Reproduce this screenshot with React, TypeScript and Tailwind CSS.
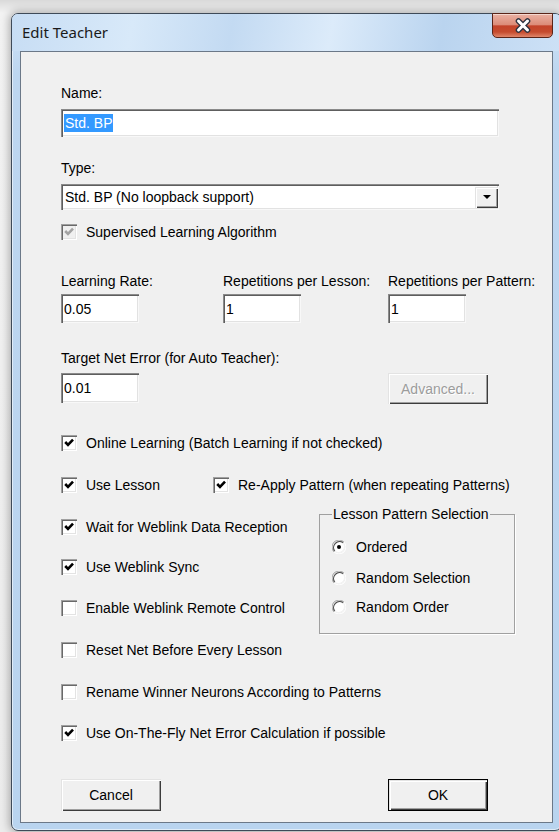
import React from "react";

// classic 3D edges drawn with inset shadows
const sunken =
  "shadow-[inset_1px_1px_0_#8a8a8a,inset_2px_2px_0_#5e5e5e,inset_-1px_-1px_0_#f8f8f8,inset_-2px_-2px_0_#e2e2e2]";
const raised =
  "shadow-[inset_1px_1px_0_#e3e3e3,inset_2px_2px_0_#ffffff,inset_-1px_-1px_0_#3c3c3c,inset_-2px_-2px_0_#a0a0a0]";

interface CheckProps {
	checked?: boolean;
	disabled?: boolean;
	label: string;
	className?: string;
}

const CheckBox: React.FC<CheckProps> = ({ checked, disabled, label, className = "" }): JSX.Element => {
	return (
		<div className={`flex h-4 items-center gap-[9px] ${className}`}>
			<span
				className={`flex h-4 w-4 shrink-0 items-center justify-center ${
					disabled ? "bg-[#f0f0f0]" : "bg-white"
				} shadow-[inset_1px_1px_0_#a0a0a0,inset_2px_2px_0_#696969,inset_-1px_-1px_0_#ffffff,inset_-2px_-2px_0_#e3e3e3]`}
			>
				{checked && (
					<svg viewBox="0 0 16 16" className="h-4 w-4">
						<path
							d="M4.2 7 L7 9.9 L12 4.6"
							fill="none"
							stroke={disabled ? "#a3a3a3" : "#000"}
							strokeWidth={2.6}
						/>
					</svg>
				)}
			</span>
			<span className="whitespace-nowrap">{label}</span>
		</div>
	);
};

const Radio: React.FC<{ checked?: boolean; label: string; className?: string }> = ({
	checked,
	label,
	className = "",
}): JSX.Element => {
	return (
		<div className={`flex h-4 items-center gap-[10px] ${className}`}>
			<svg viewBox="0 0 14 14" className="h-[14px] w-[14px] shrink-0">
				<circle cx="7" cy="7" r="5.6" fill="#fff" />
				<path d="M2.05 11.95 A7 7 0 0 1 11.95 2.05" fill="none" stroke="#a0a0a0" strokeWidth="1" />
				<path d="M2.8 11.2 A6 6 0 0 1 11.2 2.8" fill="none" stroke="#4a4a4a" strokeWidth="1.2" />
				<path d="M11.95 2.05 A7 7 0 0 1 2.05 11.95" fill="none" stroke="#ffffff" strokeWidth="1" />
				<path d="M11.2 2.8 A6 6 0 0 1 2.8 11.2" fill="none" stroke="#f2f2f2" strokeWidth="1" />
				{checked && <circle cx="7" cy="7" r="2" fill="#000" />}
			</svg>
			<span className="whitespace-nowrap">{label}</span>
		</div>
	);
};

const Field: React.FC<{ value: string; className?: string }> = ({ value, className = "" }): JSX.Element => (
	<div className={`flex items-center bg-white pl-[3px] ${sunken} ${className}`}>{value}</div>
);

const Label: React.FC<{ text: string; className?: string }> = ({ text, className = "" }): JSX.Element => (
	<p className={`whitespace-nowrap ${className}`}>{text}</p>
);

const App: React.FC = (): JSX.Element => {
	return (
		<div className="h-[832px] w-[559px] overflow-hidden bg-[linear-gradient(to_bottom,#d9d9d9,#f3f3f3_13px,#ececec)] pl-[11px] pt-[13px] font-['Liberation_Sans',Arial,sans-serif] text-[14px] leading-4 text-black">
			<div className="flex h-[818px] w-[551px] flex-col rounded-[7px] border border-[#3e4a58] bg-[linear-gradient(to_bottom,#cfe3f7,#bdd6f0_60px,#b9d4ef)] shadow-[0_0_9px_2px_rgba(0,0,0,0.28),inset_0_0_0_1px_rgba(255,255,255,0.55)]">
				{/* title bar */}
				<div className="flex h-[37px] shrink-0 items-start justify-between rounded-t-[6px] bg-[linear-gradient(100deg,#c7ddf4_0%,#d8e9f9_22%,#c3daf2_40%,#dcebfa_58%,#bad4ef_78%,#cde1f6_100%)] pl-[10px] pr-[8px]">
					<span className="mt-[9px] font-['Noto_Sans',sans-serif] text-[15px] leading-[18px] text-[#1a1a1a]">
						Edit Teacher
					</span>
					<button className="-mt-px flex h-[25px] w-[61px] items-center justify-center rounded-b-[5px] border border-[#5a2418] bg-[linear-gradient(to_bottom,#eab1a3_0%,#dc8c79_46%,#c3432a_52%,#c54b2e_78%,#e0866a_100%)] shadow-[inset_0_1px_0_rgba(255,255,255,0.5)]">
						<svg viewBox="0 0 18 15" className="h-[15px] w-[18px]">
							<path d="M4.5 3 L13.5 12 M13.5 3 L4.5 12" stroke="#2d3340" strokeWidth="5.6" strokeLinecap="round" />
							<path d="M4.5 3 L13.5 12 M13.5 3 L4.5 12" stroke="#ffffff" strokeWidth="3" strokeLinecap="round" />
						</svg>
					</button>
				</div>

				{/* dialog body */}
				<div className="mx-[8px] h-[772px] w-[533px] shrink-0 border border-[#6b7888] bg-[#f0f0f0] pl-[40px] pt-[33px]">
					<Label text="Name:" />
					<div className={`mt-[8px] flex h-[28px] w-[438px] items-center bg-white pl-[3px] ${sunken}`}>
						<span className="bg-[#3399ff] px-px leading-[18px] text-white">Std. BP</span>
					</div>

					<Label text="Type:" className="mt-[23px]" />
					<div className={`mt-[8px] flex h-[26px] w-[438px] items-center bg-white pl-[4px] pr-[1px] ${sunken}`}>
						<span className="flex-1">Std. BP (No loopback support)</span>
						<div className={`flex h-[21px] w-[23px] items-center justify-center bg-[#f0f0f0] ${raised}`}>
							<svg viewBox="0 0 8 4" className="h-[4px] w-[8px]">
								<polygon points="0,0 8,0 4,4" fill="#000" />
							</svg>
						</div>
					</div>

					<CheckBox checked disabled label="Supervised Learning Algorithm" className="mt-[14px]" />

					<div className="mt-[33px] flex">
						<div className="w-[162px]">
							<Label text="Learning Rate:" />
							<Field value="0.05" className="mt-[5px] h-[29px] w-[78px]" />
						</div>
						<div className="w-[165px]">
							<Label text="Repetitions per Lesson:" />
							<Field value="1" className="mt-[5px] h-[29px] w-[78px]" />
						</div>
						<div>
							<Label text="Repetitions per Pattern:" />
							<Field value="1" className="mt-[5px] h-[29px] w-[78px]" />
						</div>
					</div>

					<div className="mt-[27px] flex">
						<div className="w-[327px]">
							<Label text="Target Net Error (for Auto Teacher):" />
							<Field value="0.01" className="mt-[7px] h-[30px] w-[78px]" />
						</div>
						<button
							className={`mt-[23px] h-[31px] w-[100px] bg-[#f0f0f0] text-[#9c9c9c] [text-shadow:1px_1px_0_#fff] ${raised}`}
						>
							Advanced...
						</button>
					</div>

					<CheckBox checked label="Online Learning (Batch Learning if not checked)" className="mt-[31px]" />

					<div className="mt-[26px] flex">
						<CheckBox checked label="Use Lesson" className="w-[152px]" />
						<CheckBox checked label="Re-Apply Pattern (when repeating Patterns)" />
					</div>

					<div className="mt-[13px] flex">
						<div className="w-[258px]">
							<CheckBox checked label="Wait for Weblink Data Reception" className="mt-[13px]" />
							<CheckBox checked label="Use Weblink Sync" className="mt-[24px]" />
							<CheckBox label="Enable Weblink Remote Control" className="mt-[25px]" />
						</div>
						<fieldset className="h-[128px] w-[196px] border border-[#a0a0a0] px-[12px] shadow-[1px_1px_0_#fff]">
							<legend className="px-px leading-4">Lesson Pattern Selection</legend>
							<Radio checked label="Ordered" className="mt-[17px]" />
							<Radio label="Random Selection" className="mt-[15px]" />
							<Radio label="Random Order" className="mt-[13px]" />
						</fieldset>
					</div>

					<CheckBox label="Reset Net Before Every Lesson" className="mt-[8px]" />
					<CheckBox label="Rename Winner Neurons According to Patterns" className="mt-[26px]" />
					<CheckBox checked label="Use On-The-Fly Net Error Calculation if possible" className="mt-[25px]" />

					<div className="mt-[38px] flex w-[427px] justify-between">
						<button className={`h-[32px] w-[100px] bg-[#f0f0f0] ${raised}`}>Cancel</button>
						<button className={`h-[32px] w-[100px] border border-black bg-[#f0f0f0] ${raised}`}>OK</button>
					</div>
				</div>
			</div>
		</div>
	);
};

export default App;
